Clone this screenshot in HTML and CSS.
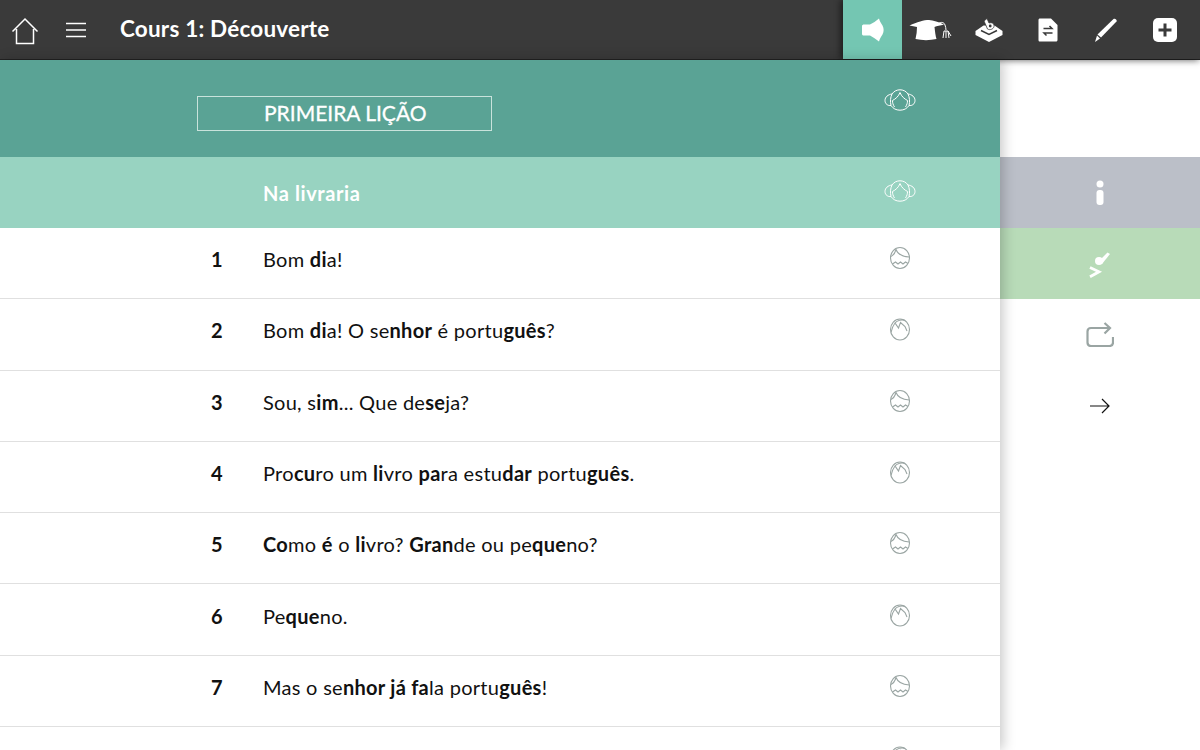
FILE: index.html
```html
<!DOCTYPE html>
<html lang="pt">
<head>
<meta charset="utf-8">
<title>Cours 1: Découverte</title>
<link rel="stylesheet" href="styles.css">
</head>
<body>
<svg class="defs" width="0" height="0" aria-hidden="true">
  <defs>
    <symbol id="head-a" viewBox="0 0 22 24">
      <ellipse cx="11" cy="12" rx="9.500" ry="10.500" fill="none" stroke="currentColor" stroke-width="1.100"/>
      <path d="M1.800 10.500C4.500 9.500 6 7 7 3.500C8.500 7.500 13 10.500 20.200 11M3.500 18L6.500 16L9 18L11.500 16L14 18L16.500 16L19 17.500" fill="none" stroke="currentColor" stroke-width="1.100"/>
    </symbol>
    <symbol id="head-b" viewBox="0 0 22 24">
      <ellipse cx="11" cy="12.500" rx="9.500" ry="10.500" fill="none" stroke="currentColor" stroke-width="1.100"/>
      <path d="M2 15.500C3 11 4 8.500 6 6L9.500 11L11.500 5.500L16 9.500L18 14M6 6C8 3.500 13 2 16 3.500" fill="none" stroke="currentColor" stroke-width="1.100"/>
    </symbol>
    <symbol id="group" viewBox="0 0 32 22">
      <path d="M8 5C10 2 13 .8 16 .8C19 .8 22 2 24 5C28 5.500 31 8 31 11.500C31 15 28 17 25 16.500C23 19.500 20 21.200 16 21.200C12 21.200 9 19.500 7 16.500C4 17 1 15 1 11.500C1 8 4 5.500 8 5Z" fill="none" stroke="currentColor" stroke-width="1"/>
      <path d="M16 3.500C14.500 7.500 11.500 10 8.500 11.500C8.500 14 9 15.500 10.500 18M16 3.500C17.500 7.500 20.500 10 23.500 11.500C23.500 14 23 15.500 21.500 18M8 5C6.500 8 6 12.500 7 16.500M24 5C25.500 8 26 12.500 25 16.500" fill="none" stroke="currentColor" stroke-width="1"/>
    </symbol>
  </defs>
</svg>

<header class="topbar">
  <div class="nav">
    <svg class="home" viewBox="0 0 28 28" width="28" height="28" aria-hidden="true">
      <path d="M1.500 14.500L14 2L26.500 14.500M5.500 12V26.500H22.500V12" fill="none" stroke="currentColor" stroke-width="1.500"/>
    </svg>
    <svg class="burger" viewBox="0 0 20 16" width="20" height="16" aria-hidden="true">
      <path d="M0 1.500H20M0 8H20M0 14.500H20" fill="none" stroke="currentColor" stroke-width="1.300"/>
    </svg>
    <h1 class="title">Cours 1: Découverte</h1>
  </div>
  <nav class="tools">
    <div class="tool tool-active">
      <svg viewBox="0 0 23 24" width="23" height="24" aria-hidden="true">
        <path d="M1 8C1 7 2 6.500 3 6.500H9C12 5 15 3 18 .5C18.500 3 20 5 21.500 7.500C23 10.500 23 13.500 21.500 16.500C20 19 18.500 21 18 23.500C15 21 12 19 9 17.500H3C2 17.500 1 17 1 16Z" fill="currentColor"/>
      </svg>
    </div>
    <div class="tool">
      <svg viewBox="0 0 44 24" width="44" height="24" aria-hidden="true">
        <path d="M.5 7.500C8 4 15 2 20 2C24 2.500 30 4 35 6.500C31 7.500 28 8 25.500 9C26 13 26.500 18 27.500 21C21 22.500 13 22.500 6.500 21C7.500 17 8 13 8 9L.5 7.500Z" fill="currentColor"/>
        <path d="M29 6C32 3.500 35 4 36 7C36.500 9 37 10 37 12M34 20L35 13H39L40 20M37 13V20M39 13L42 18" fill="none" stroke="currentColor" stroke-width="1"/>
      </svg>
    </div>
    <div class="tool">
      <svg viewBox="0 0 28 24" width="28" height="24" aria-hidden="true">
        <path d="M.5 13L8.500 7.500H19.500L27.500 13V17L14 24L.5 17Z" fill="currentColor"/>
        <path d="M6 12.500L14 16.500L22 12.500" fill="none" stroke="#3a3a3a" stroke-width="1.500"/>
        <path d="M9 3L12 .5L14 5C17 4 19.500 5.500 19 8.500C18.500 11 15 12.500 12.500 11Z" fill="currentColor" stroke="#3a3a3a" stroke-width=".8"/>
        <circle cx="15.200" cy="8" r="1.400" fill="#3a3a3a"/>
      </svg>
    </div>
    <div class="tool">
      <svg viewBox="0 0 20 24" width="20" height="24" aria-hidden="true">
        <path d="M2 .5H13L19.500 7V22C19.500 23 18.500 23.500 18 23.500H2C1 23.500 .5 23 .5 22V2C.5 1 1 .5 2 .5Z" fill="currentColor"/>
        <path d="M5.500 10.500H14L11.500 8M14.500 15H6L8.500 17.500" fill="none" stroke="#3a3a3a" stroke-width="1.500"/>
      </svg>
    </div>
    <div class="tool">
      <svg viewBox="0 0 24 24" width="24" height="24" aria-hidden="true">
        <path d="M19.500 1C21 0 23.500 2 22.500 3.500L7 19.500L3.500 16.500Z" fill="currentColor"/>
        <path d="M3 17.500L6 20.500L1 24Z" fill="currentColor"/>
      </svg>
    </div>
    <div class="tool">
      <svg viewBox="0 0 24 24" width="24" height="24" aria-hidden="true">
        <rect width="24" height="24" rx="5" fill="currentColor"/>
        <path d="M12 5.500V18.500M5.500 12H18.500" fill="none" stroke="#3a3a3a" stroke-width="3"/>
      </svg>
    </div>
  </nav>
</header>

<div class="body">
  <main class="content">
    <section class="band band-lesson">
      <div class="lesson-box">PRIMEIRA LIÇÃO</div>
      <svg class="group-icon lesson-icon"><use href="#group"/></svg>
    </section>
    <section class="band band-dialog">
      <h2 class="dialog-title">Na livraria</h2>
      <svg class="group-icon dialog-icon"><use href="#group"/></svg>
    </section>
    <ul class="rows">
      <li class="row"><span class="num">1</span><p class="line">Bom <b>di</b>a!</p><svg class="head"><use href="#head-a"/></svg></li>
      <li class="row"><span class="num">2</span><p class="line">Bom <b>di</b>a! O se<b>nhor</b> é portu<b>guês</b>?</p><svg class="head"><use href="#head-b"/></svg></li>
      <li class="row"><span class="num">3</span><p class="line">Sou, s<b>im</b>... Que de<b>se</b>ja?</p><svg class="head"><use href="#head-a"/></svg></li>
      <li class="row"><span class="num">4</span><p class="line">Pro<b>cu</b>ro um <b>li</b>vro <b>pa</b>ra estu<b>dar</b> portu<b>guês</b>.</p><svg class="head"><use href="#head-b"/></svg></li>
      <li class="row"><span class="num">5</span><p class="line"><b>Co</b>mo <b>é</b> o <b>li</b>vro? <b>Gran</b>de ou pe<b>que</b>no?</p><svg class="head"><use href="#head-a"/></svg></li>
      <li class="row"><span class="num">6</span><p class="line">Pe<b>que</b>no.</p><svg class="head"><use href="#head-b"/></svg></li>
      <li class="row"><span class="num">7</span><p class="line">Mas o se<b>nhor já fa</b>la portu<b>guês</b>!</p><svg class="head"><use href="#head-a"/></svg></li>
      <li class="row"><span class="num"></span><p class="line"></p><svg class="head"><use href="#head-b"/></svg></li>
    </ul>
  </main>
  <aside class="side">
    <div class="side-spacer"></div>
    <div class="side-btn side-info">
      <svg viewBox="0 0 10 26" width="10" height="26" aria-hidden="true">
        <circle cx="5" cy="4" r="3.500" fill="currentColor"/>
        <rect x="1.500" y="10" width="7" height="15" rx="3" fill="currentColor"/>
      </svg>
    </div>
    <div class="side-btn side-check">
      <svg viewBox="0 0 22 26" width="22" height="26" aria-hidden="true">
        <circle cx="10" cy="9" r="4" fill="currentColor"/>
        <path d="M11 8L18.500 .5L21 2L13 12Z" fill="currentColor"/>
        <path d="M1 15.500L10 19.800L1 24.800" fill="none" stroke="currentColor" stroke-width="2.800"/>
      </svg>
    </div>
    <div class="side-btn side-repeat">
      <svg viewBox="0 0 28 25" width="28" height="25" aria-hidden="true">
        <path d="M24 6H5C2.800 6 1.500 7.300 1.500 9.500V20.500C1.500 22.700 2.800 24 5 24H23.500C25.700 24 27 22.700 27 20.500V15M18.500 1L24 6L18.500 11.500" fill="none" stroke="currentColor" stroke-width="2.200"/>
      </svg>
    </div>
    <div class="side-btn side-next">
      <svg viewBox="0 0 22 16" width="22" height="16" aria-hidden="true">
        <path d="M1 8H20M13 1L20 8L13 15" fill="none" stroke="currentColor" stroke-width="1.200"/>
      </svg>
    </div>
  </aside>
</div>
</body>
</html>
```
FILE: styles.css
```css
* { box-sizing: border-box; }
html, body { margin: 0; padding: 0; height: 100%; overflow: hidden; background: #fff; }
body { font-family: "Lato", "Open Sans", sans-serif; color: #111; width: 1200px; height: 750px; }
.defs { display: block; height: 0; }

.topbar {
  height: 60px;
  background: #3a3a3a;
  border-bottom: 1px solid #222;
  display: flex;
  justify-content: space-between;
  color: #fff;
  box-shadow: 0 2px 6px rgba(0,0,0,.25);
}
.nav { display: flex; align-items: center; padding-left: 11px; }
.home { flex: none; margin-top: 2px; }
.burger { flex: none; margin-left: 27px; }
.title { margin: 0 0 3px 34px; font-size: 22.500px; font-weight: 700; letter-spacing: .2px; color: #fff; }
.tools { display: flex; padding-right: 6.300px; box-shadow: -3px 0 6px rgba(0,0,0,.45); }
.tool { width: 58.400px; height: 59px; display: flex; align-items: center; justify-content: center; color: #fff; }
.tool-active { width: 58.700px; background: #74c6b2; }

.body { display: flex; height: 690px; }
.content { width: 1000px; flex: none; background: #fff; box-shadow: 3px 0 12px rgba(0,0,0,.22); position: relative; z-index: 1; overflow: hidden; }
.side { flex: 1; display: flex; flex-direction: column; }

.band { display: flex; align-items: center; position: relative; color: #fff; }
.band-lesson { height: 97px; background: #5aa395; padding-left: 197px; }
.band-dialog { height: 71px; background: #98d3c1; padding-left: 263px; }
.lesson-box {
  width: 295px; height: 35px; margin-top: 10px;
  border: 1px solid #c9e3dc;
  padding: 0 0 2px 66px;
  display: flex; align-items: center;
  font-size: 21px; font-weight: 400;
  -webkit-text-stroke: .3px #fff;
  color: #fff;
}
.dialog-title { margin: 0; font-size: 20px; font-weight: 700; letter-spacing: .6px; }
.group-icon { width: 32px; height: 22px; color: #fff; margin-left: auto; margin-right: 84px; flex: none; }
.lesson-icon { margin-top: -17px; }
.dialog-icon { margin-top: -3px; }

.rows { list-style: none; margin: 0; padding: 0; }
.row {
  height: 71.300px;
  display: grid;
  grid-template-columns: 197px 66px 1fr 22px 89px;
  grid-template-areas: ". n t h .";
  align-items: center;
  border-bottom: 1px solid #e0e0e0;
}
.num { grid-area: n; font-size: 20px; font-weight: 700; padding: 0 0 8px 14px; }
.line { grid-area: t; margin: 0; padding-bottom: 8px; font-size: 20px; letter-spacing: .28px; color: #111; }
.line b { font-weight: 700; }
.head { grid-area: h; width: 22px; height: 24px; color: #9aa5a3; margin-top: -10px; }

.side-spacer { height: 97px; }
.side-btn { height: 71px; display: flex; align-items: center; justify-content: center; }
.side-info { background: #bbbfc8; color: #fff; }
.side-check { background: #b8dbb8; color: #fff; }
.side-check svg { margin-top: 3px; }
.side-repeat { color: #9aa5a3; }
.side-next { color: #111; }
```
